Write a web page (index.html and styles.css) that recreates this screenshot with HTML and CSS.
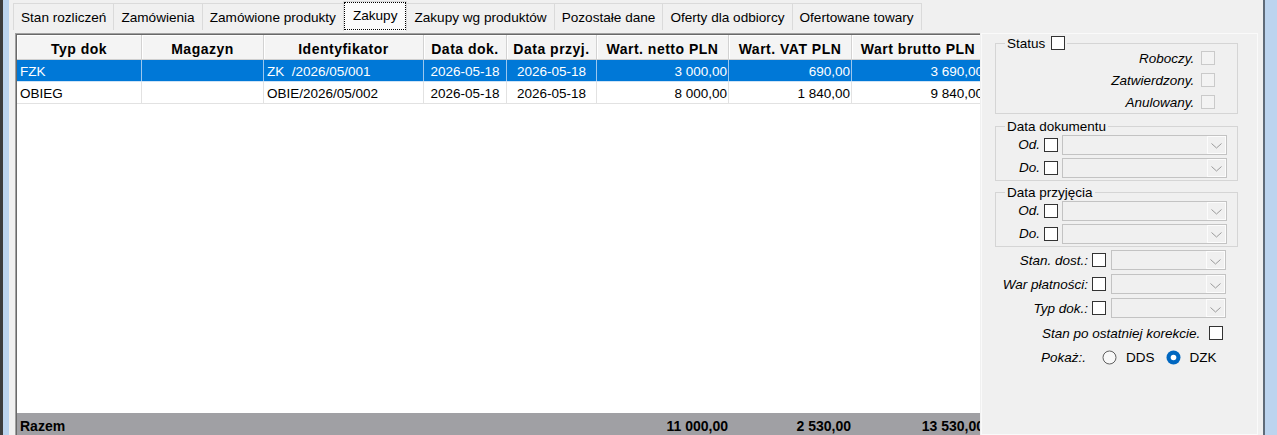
FILE: index.html
```html
<!DOCTYPE html>
<html lang="pl">
<head>
  <meta charset="UTF-8">
  <title>Zakupy</title>
  <link rel="stylesheet" href="styles.css">
</head>
<body>
  <div class="frame">
    <div class="edge-left"></div>
    <div class="main">
      <div class="tabs">
        <div class="tab">Stan rozliczeń</div>
        <div class="tab">Zamówienia</div>
        <div class="tab">Zamówione produkty</div>
        <div class="tab active">Zakupy</div>
        <div class="tab">Zakupy wg produktów</div>
        <div class="tab">Pozostałe dane</div>
        <div class="tab">Oferty dla odbiorcy</div>
        <div class="tab">Ofertowane towary</div>
      </div>

      <div class="page">
        <!-- lista dokumentow -->
        <div class="grid">
          <div class="grid-inner">
            <div class="row grid-head">
              <div class="cell">Typ dok</div>
              <div class="cell">Magazyn</div>
              <div class="cell">Identyfikator</div>
              <div class="cell">Data dok.</div>
              <div class="cell">Data przyj.</div>
              <div class="cell">Wart. netto PLN</div>
              <div class="cell">Wart. VAT PLN</div>
              <div class="cell">Wart brutto PLN</div>
            </div>
            <div class="row grid-row selected">
              <div class="cell">FZK</div>
              <div class="cell"></div>
              <div class="cell">ZK  /2026/05/001</div>
              <div class="cell date">2026-05-18</div>
              <div class="cell date">2026-05-18</div>
              <div class="cell num">3 000,00</div>
              <div class="cell num">690,00</div>
              <div class="cell num">3 690,00</div>
            </div>
            <div class="row grid-row">
              <div class="cell">OBIEG</div>
              <div class="cell"></div>
              <div class="cell">OBIE/2026/05/002</div>
              <div class="cell date">2026-05-18</div>
              <div class="cell date">2026-05-18</div>
              <div class="cell num">8 000,00</div>
              <div class="cell num">1 840,00</div>
              <div class="cell num">9 840,00</div>
            </div>
            <div class="grid-empty"></div>
            <div class="row grid-foot">
              <div class="cell">Razem</div>
              <div class="cell"></div>
              <div class="cell"></div>
              <div class="cell"></div>
              <div class="cell"></div>
              <div class="cell num">11 000,00</div>
              <div class="cell num">2 530,00</div>
              <div class="cell num">13 530,00</div>
            </div>
          </div>
        </div>

        <!-- filtry -->
        <div class="filters">
          <div class="group status">
            <div class="legend">Status <span class="chk"></span></div>
            <div class="status-rows">
              <div class="srow">Roboczy. <span class="chk off"></span></div>
              <div class="srow">Zatwierdzony. <span class="chk off"></span></div>
              <div class="srow">Anulowany. <span class="chk off"></span></div>
            </div>
          </div>

          <div class="group dates">
            <div class="legend">Data dokumentu</div>
            <div class="date-rows">
              <div class="drow">
                <span class="lbl">Od.</span><span class="chk"></span>
                <div class="combo"><span class="combo-btn"><svg width="11" height="6" viewBox="0 0 11 6"><path d="M0.5 0.5 L5.5 5 L10.5 0.5" fill="none" stroke="#9a9a9a"/></svg></span></div>
              </div>
              <div class="drow">
                <span class="lbl">Do.</span><span class="chk"></span>
                <div class="combo"><span class="combo-btn"><svg width="11" height="6" viewBox="0 0 11 6"><path d="M0.5 0.5 L5.5 5 L10.5 0.5" fill="none" stroke="#9a9a9a"/></svg></span></div>
              </div>
            </div>
          </div>

          <div class="group dates second">
            <div class="legend">Data przyjęcia</div>
            <div class="date-rows">
              <div class="drow">
                <span class="lbl">Od.</span><span class="chk"></span>
                <div class="combo"><span class="combo-btn"><svg width="11" height="6" viewBox="0 0 11 6"><path d="M0.5 0.5 L5.5 5 L10.5 0.5" fill="none" stroke="#9a9a9a"/></svg></span></div>
              </div>
              <div class="drow">
                <span class="lbl">Do.</span><span class="chk"></span>
                <div class="combo"><span class="combo-btn"><svg width="11" height="6" viewBox="0 0 11 6"><path d="M0.5 0.5 L5.5 5 L10.5 0.5" fill="none" stroke="#9a9a9a"/></svg></span></div>
              </div>
            </div>
          </div>

          <div class="frows">
            <div class="frow">
              <span class="lbl">Stan. dost.:</span><span class="chk"></span>
              <div class="combo small"><span class="combo-btn"><svg width="11" height="6" viewBox="0 0 11 6"><path d="M0.5 0.5 L5.5 5 L10.5 0.5" fill="none" stroke="#9a9a9a"/></svg></span></div>
            </div>
            <div class="frow">
              <span class="lbl">War płatności:</span><span class="chk"></span>
              <div class="combo small"><span class="combo-btn"><svg width="11" height="6" viewBox="0 0 11 6"><path d="M0.5 0.5 L5.5 5 L10.5 0.5" fill="none" stroke="#9a9a9a"/></svg></span></div>
            </div>
            <div class="frow">
              <span class="lbl">Typ dok.:</span><span class="chk"></span>
              <div class="combo small"><span class="combo-btn"><svg width="11" height="6" viewBox="0 0 11 6"><path d="M0.5 0.5 L5.5 5 L10.5 0.5" fill="none" stroke="#9a9a9a"/></svg></span></div>
            </div>
          </div>

          <div class="korekta">Stan po ostatniej korekcie. <span class="chk"></span></div>

          <div class="pokaz">
            <span class="lbl">Pokaż:.</span>
            <span class="radio-opt">
              <svg width="15" height="15" viewBox="0 0 15 15"><circle cx="7.5" cy="7.5" r="6.5" fill="#f8f8f8" stroke="#606060"/></svg>
              DDS
            </span>
            <span class="radio-opt">
              <svg width="15" height="15" viewBox="0 0 15 15"><circle cx="7.5" cy="7.5" r="7" fill="#0067c0"/><circle cx="7.5" cy="7.5" r="2.8" fill="#fff"/></svg>
              DZK
            </span>
          </div>
        </div>
      </div>
    </div>
    <div class="edge-right"></div>
  </div>
</body>
</html>
```

FILE: styles.css
```css
:root {
  --bg: #f0f0f0;
  --grid-line: #e2e2e2;
  --select: #0078d7;
  --group-line: #d5d5d5;
}
body {
  margin: 0;
  background: var(--bg);
  font-family: "Liberation Sans", Arial, sans-serif;
  font-size: 13.5px;
  color: #000;
  overflow: hidden;
}
.frame {
  display: flex;
  width: 1277px;
  height: 435px;
}
.edge-left {
  width: 9px;
  flex: none;
  background: linear-gradient(to right, #3d3d3d 0 3px, #bcd4ee 3px);
}
.edge-right {
  width: 15px;
  flex: none;
  background: linear-gradient(to right, var(--bg) 0 1px, #5f6b78 1px 3px, #bcd4ee 3px);
}
.main {
  width: 1253px;
  flex: none;
  display: flex;
  flex-direction: column;
  min-height: 0;
}

/* zakladki */
.tabs {
  height: 33px;
  flex: none;
  display: flex;
  align-items: flex-start;
  padding-left: 4px;
}
.tab {
  box-sizing: border-box;
  margin-top: 3px;
  margin-right: -1px;
  height: 27px;
  padding: 0 7px 0 7px;
  display: flex;
  align-items: center;
  border: 1px solid #dadada;
  border-bottom: none;
  background: var(--bg);
  white-space: nowrap;
  font-size: 13.6px;
}
.tab.active {
  margin-top: 1px;
  height: 30px;
  padding: 0 9px 3px 9px;
  background: #fbfbfb;
  outline: 1px dotted #000;
  outline-offset: -2px;
  position: relative;
  z-index: 1;
}

.page {
  flex: 1;
  min-height: 0;
  display: flex;
  padding-left: 6px;
}

/* tabela */
.grid {
  width: 965px;
  flex: none;
  box-sizing: border-box;
  border-top: 1px solid #a0a0a0;
  border-left: 1px solid #a0a0a0;
  display: flex;
  overflow: hidden;
}
.grid-inner {
  flex: 1;
  min-width: 0;
  display: flex;
  flex-direction: column;
  border-top: 1px solid #696969;
  border-left: 1px solid #696969;
  background: #fff;
  overflow: hidden;
}
.row {
  display: grid;
  grid-template-columns: 125px 122px 160px 83px 90px 132px 123px 133px;
  flex: none;
  box-sizing: border-box;
}
.cell {
  display: flex;
  align-items: center;
  padding: 2px 3px 0;
  white-space: pre;
  overflow: hidden;
  box-sizing: border-box;
}
.cell.num {
  justify-content: flex-end;
  padding-right: 1px;
}
.cell.date {
  justify-content: center;
}
.grid-head {
  height: 25px;
  background: #f4f4f4;
  border-bottom: 1px solid #cfcfcf;
}
.grid-head .cell {
  justify-content: center;
  padding-top: 3px;
  font-weight: bold;
  font-size: 14px;
  letter-spacing: 0.5px;
  border-right: 1px solid #d2d2d2;
  box-shadow: inset 1px 1px 0 #fff;
}
.grid-row {
  height: 22px;
  border-bottom: 1px solid var(--grid-line);
}
.grid-row .cell {
  border-right: 1px solid var(--grid-line);
}
.grid-row.selected {
  background: var(--select);
  color: #fff;
  border-bottom-color: #cfe3f6;
}
.grid-row.selected .cell {
  border-right-color: #9cc7ee;
}
.grid-empty {
  flex: 1;
}
.grid-foot {
  height: 22px;
  background: #a0a0a4;
  font-weight: bold;
  font-size: 14px;
}
.grid-foot .cell {
  padding-top: 3px;
}

/* panel filtrow */
.filters {
  width: 277px;
  flex: none;
  margin-left: 1px;
  box-sizing: border-box;
  border: 1px solid #fafafa;
  padding: 0 19px 0 13px;
}
.chk {
  width: 14px;
  height: 14px;
  flex: none;
  box-sizing: border-box;
  border: 1px solid #333;
  background: #fff;
  display: inline-block;
}
.chk.off {
  border-color: #cacaca;
  background: #f3f3f3;
}
.group {
  border: 1px solid var(--group-line);
  padding-bottom: 1px;
}
.group.status {
  margin-top: 9px;
  padding-bottom: 0;
}
.group.dates {
  margin-top: 12px;
}
.group.dates.second {
  margin-top: 11px;
}
.legend {
  margin: -9px 0 0 9px;
  padding: 0 2px;
  height: 16px;
  width: fit-content;
  background: var(--bg);
  display: flex;
  align-items: center;
  gap: 6px;
}
.status-rows {
  margin-top: -4px;
}
.srow {
  height: 22px;
  display: flex;
  align-items: center;
  justify-content: flex-end;
  gap: 3px;
  padding-right: 22px;
  font-style: italic;
  white-space: pre;
}
.date-rows {
  margin-top: -1px;
}
.drow {
  height: 23px;
  display: flex;
  align-items: center;
}
.drow .lbl {
  width: 44px;
  margin-right: 4px;
  text-align: right;
  font-style: italic;
}
.drow .chk {
  margin-right: 4px;
}
.combo {
  width: 165px;
  height: 20px;
  flex: none;
  box-sizing: border-box;
  border: 1px solid #c3c3c3;
  background: var(--bg);
  display: flex;
  justify-content: flex-end;
}
.combo.small {
  width: 115px;
}
.combo-btn {
  width: 19px;
  display: flex;
  align-items: center;
  justify-content: center;
  padding-top: 3px;
  box-sizing: border-box;
  box-shadow: inset 0 0 0 1px #fcfcfc;
}
.frows {
  margin-top: 1px;
}
.frow {
  height: 24px;
  display: flex;
  align-items: center;
  padding-right: 12px;
}
.frow .lbl {
  flex: 1;
  margin-right: 4px;
  text-align: right;
  font-style: italic;
  white-space: nowrap;
}
.frow .chk {
  margin-right: 5px;
}
.korekta {
  height: 22px;
  margin-top: 2px;
  display: flex;
  align-items: center;
  justify-content: flex-end;
  gap: 5px;
  padding-right: 15px;
  font-style: italic;
  white-space: pre;
}
.pokaz {
  height: 23px;
  margin-top: 2px;
  display: flex;
  align-items: center;
}
.pokaz .lbl {
  width: 91px;
  text-align: right;
  font-style: italic;
}
.radio-opt {
  display: flex;
  align-items: center;
  gap: 9px;
  margin-left: 16px;
}
.radio-opt + .radio-opt {
  margin-left: 11px;
}
```
